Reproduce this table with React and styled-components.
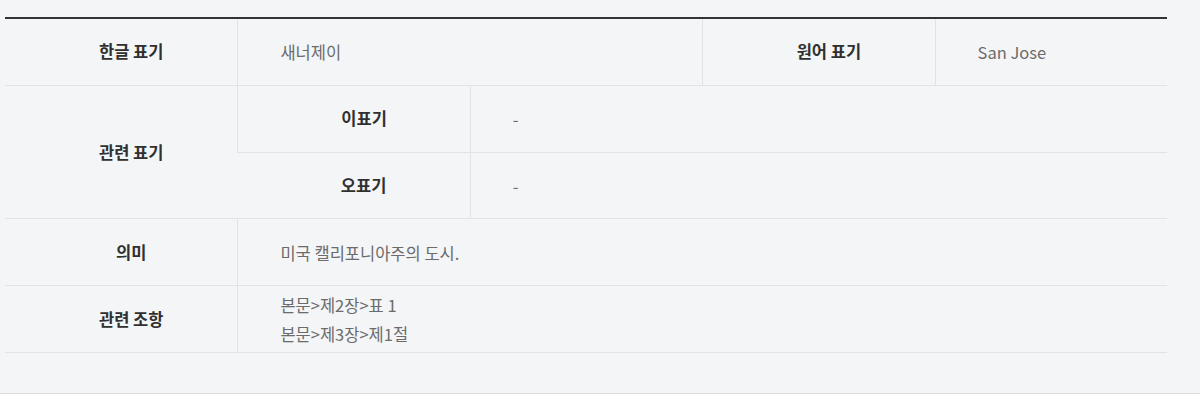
import React from "react";
import styled, { createGlobalStyle } from "styled-components";

const GlobalStyle = createGlobalStyle`
    html, body {
        margin: 0;
        padding: 0;
        background: #ffffff;
    }
    body {
        font-family: "Noto Sans CJK KR", "Noto Sans", sans-serif;
    }
`;

const Page = styled.div`
    background: #f4f5f7;
    padding: 17px 33px 40px 5px;
    border-bottom: 1px solid #dcdde0;
`;

const Table = styled.div`
    display: grid;
    grid-template-columns: repeat(5, 1fr);
    grid-auto-rows: 66.8px;
    border-top: 2px solid #333333;
`;

const Cell = styled.div`
    display: flex;
    flex-direction: column;
    justify-content: center;
    box-sizing: border-box;
    border-bottom: 1px solid #e2e3e6;
    border-left: ${(p) => (p.$divider ? "1px solid #e2e3e6" : "none")};
    grid-column: span ${(p) => p.$span || 1};
    grid-row: span ${(p) => p.$rows || 1};
    font-size: 16.5px;
    line-height: 29px;
`;

const Label = styled(Cell)`
    align-items: center;
    padding-left: 20px;
    font-weight: 700;
    color: #303030;
`;

const Value = styled(Cell)`
    padding-left: 42px;
    padding-top: 2px;
    font-weight: 400;
    color: #6b6b6b;
`;

export default function App() {
    return (
        <>
            <GlobalStyle />
            <Page>
                <Table>
                    <Label>한글 표기</Label>
                    <Value $divider $span={2}>
                        새너제이
                    </Value>
                    <Label $divider>원어 표기</Label>
                    <Value $divider>San Jose</Value>

                    <Label $rows={2}>관련 표기</Label>
                    <Label $divider>이표기</Label>
                    <Value $divider $span={3}>
                        -
                    </Value>
                    <Label>오표기</Label>
                    <Value $divider $span={3}>
                        -
                    </Value>

                    <Label>의미</Label>
                    <Value $divider $span={4}>
                        미국 캘리포니아주의 도시.
                    </Value>

                    <Label>관련 조항</Label>
                    <Value $divider $span={4}>
                        <div>본문&gt;제2장&gt;표 1</div>
                        <div>본문&gt;제3장&gt;제1절</div>
                    </Value>
                </Table>
            </Page>
        </>
    );
}
